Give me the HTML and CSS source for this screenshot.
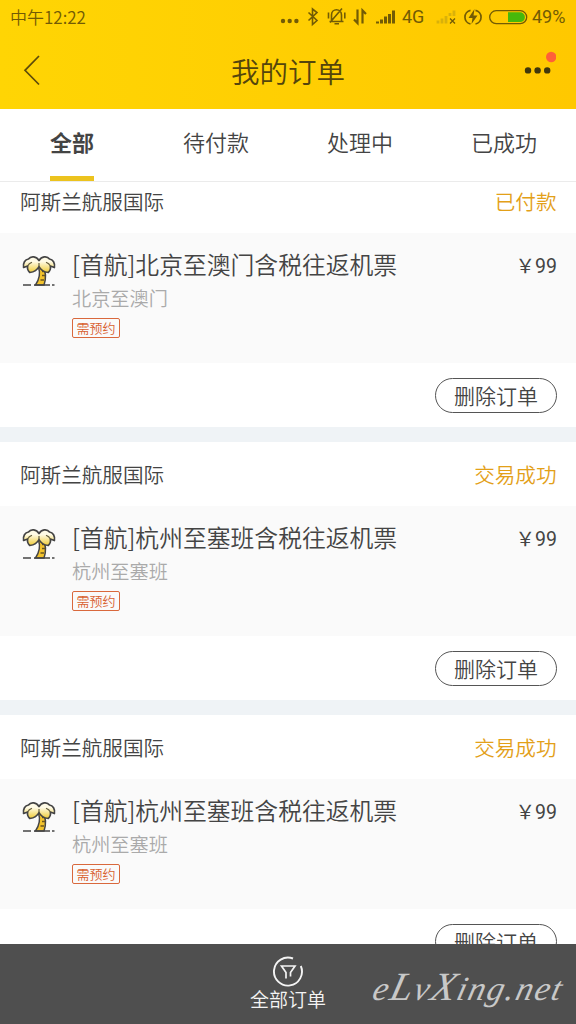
FILE: index.html
```html
<!DOCTYPE html>
<html lang="zh-CN">
<head>
<meta charset="utf-8">
<title>我的订单</title>
<link rel="stylesheet" href="styles.css">
</head>
<body>
<svg class="defs" width="0" height="0">
  <linearGradient id="leaf" x1="0" y1="0" x2="0" y2="1"><stop offset=".3" stop-color="#fffbe6"/><stop offset="1" stop-color="#efcb35"/></linearGradient>
  <symbol id="palm" viewBox="0 0 34 34">
    <path d="M13.500 31C17.500 25 18.500 19 16.500 13h4.500C24 18 24 25 22 31z" fill="#f3c32c" stroke="#454545" stroke-width="1.500"/>
    <path d="M20 17.500h2.500M20 21.500h3M18.500 26h3.500" stroke="#6b5520" stroke-width="1.400"/>
    <path d="M17 6.500C14.500 2.300 9 1.500 6.500 5 3 5.500.8 9 1.600 13.500l4-1.500C5.200 14.500 6 17 7.800 18.500c4-.5 7.500-2.500 9.200-6 1.700 3.500 5.200 5.500 9.200 6 1.800-1.500 2.600-4 2.200-6.500l4 1.500C33.200 9 31 5.500 27.500 5 25 1.500 19.500 2.300 17 6.500z" fill="url(#leaf)" stroke="#454545" stroke-width="1.700" stroke-linejoin="round"/>
    <path d="M5.600 12c1-2 2.500-3 4.400-3.700M28.400 12c-1-2-2.500-3-4.400-3.700M17 12.500V9" fill="none" stroke="#666040" stroke-width="1.200"/>
    <path d="M1 31h8M12 31h16M30 31h2.500" stroke="#454545" stroke-width="1.400"/>
  </symbol>
</svg>
<div class="screen">
  <header class="top">
    <div class="status">
      <span class="clock">中午12:22</span>
      <svg class="status-icons" width="122" height="24" viewBox="280 4 122 24" fill="none" stroke="#725b05" stroke-width="1.600">
        <g fill="#725b05" stroke="none"><circle cx="283" cy="20" r="2.200"/><circle cx="289.700" cy="20" r="2.200"/><circle cx="296.400" cy="20" r="2.200"/></g>
        <path d="M308.500 11.500l8.500 8-4.500 4V8l4.500 3.500-8.500 8"/>
        <path d="M329.500 20.500h14M331.500 20v-6c0-7 10-7 10 0v6M334.500 22.700h4.500M328.500 11.500v6M344.800 11.500v6M342 7.500l-12 14"/>
        <path d="M357.500 8.500v13.500l-3.500-3.500M362.500 22.500V9.500l3.500 3.500" stroke-width="2.200"/>
        <path d="M377.500 22.500v-2M381.500 22.500v-4M385.500 22.500v-7M389.500 22.500v-9.500M393.500 22.500v-13" stroke-width="3"/>
      </svg>
      <span class="net">4G</span>
      <svg class="power-icons" width="94" height="24" viewBox="434 4 94 24" fill="none" stroke="#725b05">
        <path d="M438 22.500v-3M442 22.500v-5M446 22.500v-7.500M450 15v-3M454 15V9.500" stroke="#d9b10a" stroke-width="2.800"/>
        <path d="M450 17.500l5 5M455 17.500l-5 5" stroke-width="1.300"/>
        <path d="M470.500 9.300a7 7 0 0 0 0 13.700M475.500 9.300a7 7 0 0 1 0 13.700" stroke-width="1.700"/>
        <path d="M474.500 8l-6 9h4l-1 6 6-8.500h-4z" fill="#725b05" stroke="none"/>
        <rect x="489.700" y="9.700" width="37" height="13" rx="6.500" stroke-width="1.300"/>
        <path d="M508 11.300h12a4.900 4.900 0 0 1 0 9.800h-12z" fill="#46b80b" stroke="none"/>
      </svg>
      <span class="battery">49%</span>
    </div>
    <div class="nav">
      <svg class="back" width="20" height="34" viewBox="0 0 20 34" fill="none" stroke="#5e4b0a" stroke-width="1.700"><path d="M17 2L3 16.300 17 30.500"/></svg>
      <h1 class="title">我的订单</h1>
      <svg class="more" width="34" height="28" viewBox="0 0 34 28"><g fill="#40370c"><circle cx="6" cy="19.400" r="3.200"/><circle cx="15.600" cy="19.400" r="3.200"/><circle cx="25.200" cy="19.400" r="3.200"/></g><circle cx="29.200" cy="6" r="5.200" fill="#ff6038"/></svg>
    </div>
  </header>
  <nav class="tabs">
    <span class="tab active">全部</span><span class="tab">待付款</span><span class="tab">处理中</span><span class="tab">已成功</span>
  </nav>
  <main class="list">
    <section class="order">
      <div class="head"><span>阿斯兰航服国际</span><span class="state">已付款</span></div>
      <div class="body"><svg class="palm"><use href="#palm"/></svg>
        <div class="info"><div class="name">[首航]北京至澳门含税往返机票</div><div class="route">北京至澳门</div><span class="tag">需预约</span></div>
        <span class="price">￥99</span></div>
      <div class="foot"><span class="btn">删除订单</span></div>
    </section>
    <section class="order">
      <div class="head"><span>阿斯兰航服国际</span><span class="state">交易成功</span></div>
      <div class="body"><svg class="palm"><use href="#palm"/></svg>
        <div class="info"><div class="name">[首航]杭州至塞班含税往返机票</div><div class="route">杭州至塞班</div><span class="tag">需预约</span></div>
        <span class="price">￥99</span></div>
      <div class="foot"><span class="btn">删除订单</span></div>
    </section>
    <section class="order">
      <div class="head"><span>阿斯兰航服国际</span><span class="state">交易成功</span></div>
      <div class="body"><svg class="palm"><use href="#palm"/></svg>
        <div class="info"><div class="name">[首航]杭州至塞班含税往返机票</div><div class="route">杭州至塞班</div><span class="tag">需预约</span></div>
        <span class="price">￥99</span></div>
      <div class="foot"><span class="btn">删除订单</span></div>
    </section>
  </main>
  <footer class="bottom">
    <svg class="filter" width="32" height="32" viewBox="0 0 32 32" fill="none" stroke="#f4f4f4" stroke-width="1.900"><path d="M21 3.500A14 14 0 1 0 28.800 11"/><path d="M14 23.500v-6L9.500 11h13.500l-4.500 6.500v4" stroke-width="1.700"/></svg>
    <span class="all">全部订单</span>
    <svg class="mark" width="226" height="60" viewBox="-20 0 226 60"><text x="0" y="36" textLength="188" lengthAdjust="spacing" transform="translate(10 0) skewX(-14)">e<tspan class="cap">L</tspan>v<tspan class="cap">X</tspan>ing.net</text></svg>
  </footer>
</div>
</body>
</html>
```
FILE: styles.css
```css
* { box-sizing: border-box; }
body {
  margin: 0;
  font-family: "Noto Sans CJK SC", sans-serif;
  font-weight: 350;
  color: #444;
}
.defs { position: absolute; }
.screen {
  width: 576px;
  height: 1024px;
  overflow: hidden;
  display: flex;
  flex-direction: column;
  background: #fff;
}
.top {
  height: 109px;
  flex: none;
  background: linear-gradient(90deg, #ffd504, #ffc800);
}
.status {
  height: 34px;
  display: flex;
  align-items: center;
  padding: 0 10px;
  color: #725b05;
  font-size: 17px;
  line-height: 34px;
}
.clock { width: 270px; font-size: 17px; }
.status-icons, .power-icons { flex: none; }
.net { width: 32px; font: 18px/34px Roboto, sans-serif; }
.battery { padding-left: 4px; font: 18px/34px Roboto, sans-serif; }
.nav {
  height: 75px;
  display: grid;
  grid-template-columns: 62px 1fr 62px;
  align-items: start;
}
.back { margin: 20px 0 0 22px; }
.title {
  margin: 0;
  text-align: center;
  font-size: 28.5px;
  font-weight: 350;
  line-height: 73px;
  color: #54450c;
}
.more { margin: 17px 0 0 8px; }
.tabs {
  height: 73px;
  flex: none;
  display: grid;
  grid-template-columns: repeat(4, 1fr);
  justify-items: center;
  border-bottom: 1px solid #ebebeb;
  font-size: 22px;
  line-height: 65px;
}
.tab { height: 72px; }
.active { font-weight: 700; border-bottom: 5px solid #ecc31e; }
.list { flex: 1; min-height: 0; overflow: hidden; }
.order { border-bottom: 15px solid #eff3f6; }
.order:first-child { margin-top: -13px; }
.head {
  height: 64px;
  display: flex;
  justify-content: space-between;
  padding: 0 19.5px 0 20px;
  font-size: 20.6px;
  line-height: 65px;
}
.state { color: #e3a018; }
.body {
  height: 130px;
  display: flex;
  padding: 0 19px 0 22px;
  background: #fafafa;
}
.palm { width: 34px; height: 34px; margin: 21px 16px 0 0; flex: none; }
.info { flex: 1; }
.name { margin-top: 13px; font-size: 23.8px; line-height: 36px; white-space: nowrap; }
.route { margin-top: 1px; font-size: 19.2px; line-height: 30px; color: #aaa; }
.tag {
  display: block;
  width: 48px;
  height: 20px;
  margin-top: 5px;
  border: 1px solid #d9683c;
  border-radius: 2px;
  color: #d8602f;
  font-size: 13px;
  line-height: 18px;
  text-align: center;
}
.price { margin-top: 19px; font-family: Roboto, "Noto Sans CJK SC", sans-serif; font-size: 19.5px; font-weight: 400; line-height: 30px; }
.foot {
  height: 64px;
  display: flex;
  justify-content: flex-end;
  align-items: center;
  padding-right: 19px;
}
.btn {
  width: 122px;
  height: 35px;
  border: 1px solid #555;
  border-radius: 18px;
  font-size: 21px;
  line-height: 32px;
  text-align: center;
}
.bottom {
  position: relative;
  height: 80px;
  flex: none;
  display: flex;
  flex-direction: column;
  align-items: center;
  padding-top: 11px;
  background: #4f4f4f;
  color: #f4f4f4;
}
.all { font-size: 19px; line-height: 24px; }
.mark { position: absolute; right: 0; top: 20px; }
.mark text { font: italic 34px "Liberation Serif", serif; fill: #c8c8c8; }
.mark .cap { font-size: 40px; }
```
